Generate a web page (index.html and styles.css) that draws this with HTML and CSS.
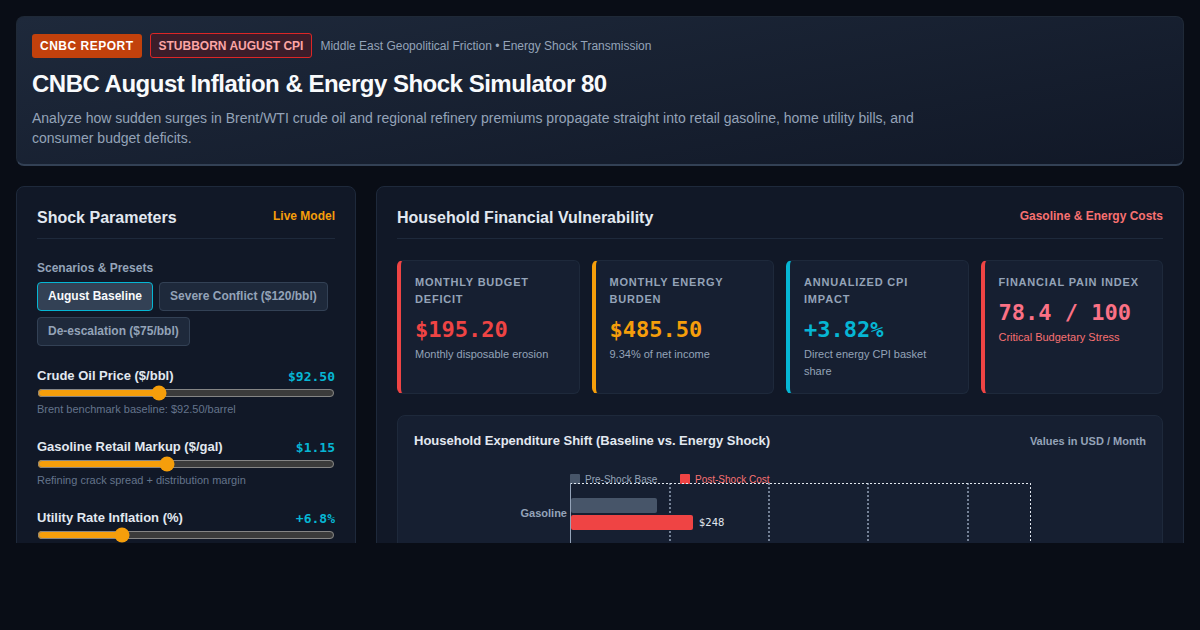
FILE: index.html
```html
<!DOCTYPE html>
<html lang="en">
<head>
  <meta charset="UTF-8" />
  <meta name="viewport" content="width=device-width, initial-scale=1.0"/>
  <title>CNBC August Inflation &amp; Energy Shock Simulator</title>
  <link rel="stylesheet" href="styles.css">
</head>
<body>

  <header class="hero">
    <div class="hero-tags">
      <span class="tag tag-report">CNBC Report</span>
      <span class="tag tag-cpi">Stubborn August CPI</span>
      <span class="hero-meta">Middle East Geopolitical Friction &bull; Energy Shock Transmission</span>
    </div>
    <h1>CNBC August Inflation &amp; Energy Shock Simulator 80</h1>
    <p class="hero-desc">Analyze how sudden surges in Brent/WTI crude oil and regional refinery premiums propagate straight into retail gasoline, home utility bills, and consumer budget deficits.</p>
  </header>

  <div class="workspace">

    <section class="panel">
      <div class="panel-head">
        <h2>Shock Parameters</h2>
        <span class="panel-tag tag-amber">Live Model</span>
      </div>

      <div class="section-label">Scenarios &amp; Presets</div>
      <div class="presets">
        <button class="preset active">August Baseline</button>
        <button class="preset">Severe Conflict ($120/bbl)</button>
        <button class="preset">De-escalation ($75/bbl)</button>
      </div>

      <div class="control">
        <div class="control-row">
          <label for="crude">Crude Oil Price ($/bbl)</label>
          <span class="control-val">$92.50</span>
        </div>
        <input type="range" id="crude" min="40" max="170" step="0.5" value="92.5">
        <div class="control-help">Brent benchmark baseline: $92.50/barrel</div>
      </div>

      <div class="control">
        <div class="control-row">
          <label for="markup">Gasoline Retail Markup ($/gal)</label>
          <span class="control-val">$1.15</span>
        </div>
        <input type="range" id="markup" min="0.2" max="2.4" step="0.05" value="1.15">
        <div class="control-help">Refining crack spread + distribution margin</div>
      </div>

      <div class="control">
        <div class="control-row">
          <label for="utility">Utility Rate Inflation (%)</label>
          <span class="control-val">+6.8%</span>
        </div>
        <input type="range" id="utility" min="0" max="25" step="0.1" value="6.8">
      </div>
    </section>

    <section class="panel">
      <div class="panel-head">
        <h2>Household Financial Vulnerability</h2>
        <span class="panel-tag tag-red">Gasoline &amp; Energy Costs</span>
      </div>

      <div class="stats">
        <div class="stat stat-red">
          <div class="stat-label">Monthly Budget Deficit</div>
          <div class="stat-value">$195.20</div>
          <div class="stat-sub">Monthly disposable erosion</div>
        </div>
        <div class="stat stat-amber">
          <div class="stat-label">Monthly Energy Burden</div>
          <div class="stat-value">$485.50</div>
          <div class="stat-sub">9.34% of net income</div>
        </div>
        <div class="stat stat-cyan">
          <div class="stat-label">Annualized CPI Impact</div>
          <div class="stat-value">+3.82%</div>
          <div class="stat-sub">Direct energy CPI basket share</div>
        </div>
        <div class="stat stat-pain">
          <div class="stat-label">Financial Pain Index</div>
          <div class="stat-value">78.4 / 100</div>
          <div class="stat-sub">Critical Budgetary Stress</div>
        </div>
      </div>

      <div class="chart-card">
        <div class="chart-head">
          <h3>Household Expenditure Shift (Baseline vs. Energy Shock)</h3>
          <span class="chart-unit">Values in USD / Month</span>
        </div>
        <svg class="chart" viewBox="0 0 732 120" width="732" height="120">
          <!-- legend -->
          <rect x="156" y="9" width="10" height="10" rx="1" fill="#475569"/>
          <text x="171" y="18" class="legend">Pre-Shock Base</text>
          <rect x="266" y="9" width="10" height="10" rx="1" fill="#ef4444"/>
          <text x="281" y="18" class="legend legend-red">Post-Shock Cost</text>

          <!-- grid -->
          <line x1="256" y1="18" x2="256" y2="120" class="grid"/>
          <line x1="355" y1="18" x2="355" y2="120" class="grid"/>
          <line x1="454" y1="18" x2="454" y2="120" class="grid"/>
          <line x1="554" y1="18" x2="554" y2="120" class="grid"/>
          <line x1="156" y1="18.5" x2="616" y2="18.5" class="frame"/>
          <line x1="616.5" y1="18" x2="616.5" y2="120" class="frame"/>
          <line x1="156.5" y1="18" x2="156.5" y2="120" class="axis"/>

          <!-- gasoline -->
          <text x="153" y="52" class="cat">Gasoline</text>
          <rect x="157" y="33" width="86" height="15" rx="2" fill="#475569"/>
          <rect x="157" y="50" width="122" height="15" rx="2" fill="#ef4444"/>
          <text x="285" y="61" class="bar-val">$248</text>
        </svg>
      </div>
    </section>

  </div>

</body>
</html>
```

FILE: styles.css
```css
* {
  box-sizing: border-box;
}

body {
  margin: 0;
  padding: 16px;
  background-color: #090d16;
  color: #e2e8f0;
  font-family: "Liberation Sans", Arial, sans-serif;
}

/* header */

.hero {
  background: linear-gradient(170deg, #1e293b 0%, #111827 100%);
  border: 1px solid #1f2937;
  border-bottom: 2px solid #334155;
  border-radius: 8px;
  padding: 16px 15px;
  margin-bottom: 20px;
}

.hero-tags {
  display: flex;
  align-items: center;
  gap: 8px;
  height: 25px;
}

.tag {
  font-size: 12px;
  line-height: 16px;
  font-weight: bold;
  text-transform: uppercase;
  padding: 4px 8px;
  border-radius: 3px;
}

.tag-report {
  background-color: #c2410c;
  color: #fff;
  letter-spacing: 0.5px;
}

.tag-cpi {
  background-color: #3b1d2a;
  border: 1px solid #dc2626;
  color: #fca5a5;
  padding: 3.5px 8px;
}

.hero-meta {
  font-size: 12px;
  color: #94a3b8;
}

.hero h1 {
  margin: 11px 0 10px;
  font-size: 24px;
  line-height: 29px;
  letter-spacing: -0.5px;
  color: #f8fafc;
}

.hero-desc {
  margin: 0;
  max-width: 900px;
  font-size: 14px;
  line-height: 20px;
  color: #94a3b8;
}

/* panels */

.workspace {
  display: grid;
  grid-template-columns: 340px 1fr;
  gap: 20px;
  height: 357px;
  overflow: hidden;
}

.panel {
  background-color: #111827;
  border: 1px solid #1e293b;
  border-radius: 8px;
  padding: 20px;
  align-self: start;
}

.panel-head {
  display: flex;
  justify-content: space-between;
  align-items: flex-start;
  padding-bottom: 9px;
  border-bottom: 1px solid #1e293b;
  margin-bottom: 21px;
}

.panel-head h2 {
  margin: 0;
  font-size: 16px;
  line-height: 22px;
  color: #e2e8f0;
}

.panel-tag {
  font-size: 12px;
  font-weight: bold;
  line-height: 18px;
}

.tag-amber {
  color: #f59e0b;
}

.tag-red {
  color: #f87171;
}

/* controls */

.section-label {
  font-size: 12px;
  line-height: 16px;
  font-weight: bold;
  color: #94a3b8;
  margin-bottom: 6px;
}

.presets {
  display: flex;
  flex-wrap: wrap;
  gap: 6px;
  margin-bottom: 21px;
}

.preset {
  font-family: inherit;
  font-size: 12px;
  line-height: 15px;
  font-weight: bold;
  padding: 6px 10px;
  background-color: #1e293b;
  border: 1px solid #334155;
  border-radius: 4px;
  color: #94a3b8;
  cursor: pointer;
}

.preset.active {
  background-color: #334155;
  border-color: #06b6d4;
  color: #f8fafc;
}

.control {
  margin-bottom: 22px;
}

.control-row {
  display: flex;
  justify-content: space-between;
  align-items: center;
}

.control-row label {
  font-size: 13px;
  line-height: 18px;
  font-weight: bold;
  color: #e2e8f0;
}

.control-val {
  font-family: "DejaVu Sans Mono", monospace;
  font-size: 13px;
  font-weight: bold;
  color: #06b6d4;
}

.control input[type="range"] {
  display: block;
  width: 100%;
  margin: 0 0 1px;
  accent-color: #f59e0b;
  color-scheme: dark;
}

.control-help {
  font-size: 11px;
  line-height: 14px;
  color: #64748b;
}

/* stats */

.stats {
  display: grid;
  grid-template-columns: repeat(4, 1fr);
  gap: 12px;
  margin-bottom: 21px;
}

.stat {
  background-color: #161f31;
  border: 1px solid #1e293b;
  border-left: 4px solid #ef4444;
  border-radius: 6px;
  padding: 13px 12px 13px 14px;
}

.stat-amber {
  border-left-color: #f59e0b;
}

.stat-cyan {
  border-left-color: #06b6d4;
}

.stat-label {
  font-size: 11px;
  line-height: 17px;
  font-weight: bold;
  text-transform: uppercase;
  letter-spacing: 0.8px;
  color: #94a3b8;
}

.stat-value {
  margin: 9px 0 3px;
  font-family: "DejaVu Sans Mono", monospace;
  font-size: 22px;
  line-height: 26px;
  font-weight: bold;
  color: #ef4444;
}

.stat-amber .stat-value {
  color: #f59e0b;
}

.stat-cyan .stat-value {
  color: #06b6d4;
}

.stat-pain .stat-value {
  color: #fb7185;
}

.stat-sub {
  font-size: 11px;
  line-height: 17px;
  color: #94a3b8;
}

.stat-pain .stat-sub {
  color: #f87171;
}

/* chart */

.chart-card {
  background-color: #161f31;
  border: 1px solid #1e293b;
  border-radius: 8px;
  padding: 16px;
}

.chart-head {
  display: flex;
  justify-content: space-between;
  align-items: center;
  margin-bottom: 16px;
}

.chart-head h3 {
  margin: 0;
  font-size: 13px;
  line-height: 17px;
  color: #e2e8f0;
}

.chart-unit {
  font-size: 11px;
  font-weight: bold;
  color: #94a3b8;
}

.chart {
  display: block;
}

.chart .legend {
  font-family: "Liberation Sans", Arial, sans-serif;
  font-size: 10px;
  fill: #94a3b8;
}

.chart .legend-red {
  fill: #f87171;
}

.chart .grid {
  stroke: #94a3b8;
  stroke-width: 1.5;
  stroke-dasharray: 2 2;
}

.chart .frame {
  stroke: #e2e8f0;
  stroke-width: 1;
  stroke-dasharray: 2 2;
}

.chart .axis {
  stroke: #94a3b8;
  stroke-width: 1;
}

.chart .cat {
  font-family: "Liberation Sans", Arial, sans-serif;
  font-size: 11px;
  font-weight: bold;
  fill: #94a3b8;
  text-anchor: end;
}

.chart .bar-val {
  font-family: "DejaVu Sans", sans-serif;
  font-size: 10px;
  fill: #e2e8f0;
}
```
